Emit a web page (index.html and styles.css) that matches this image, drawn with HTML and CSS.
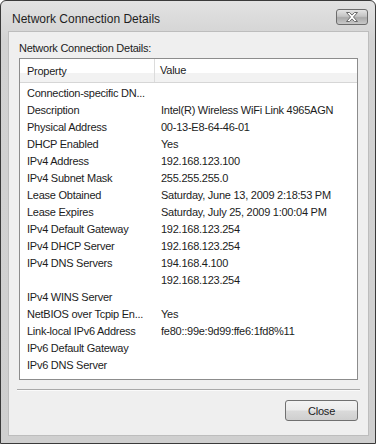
FILE: index.html
```html
<!DOCTYPE html>
<html lang="en">
<head>
  <meta charset="UTF-8" />
  <title>Network Connection Details</title>
  <link rel="stylesheet" href="styles.css">
</head>
<body>
  <div class="window">
    <div class="titlebar">
      <span class="title">Network Connection Details</span>
      <div class="x-btn">
        <svg width="14" height="10" viewBox="0 0 14 10">
          <path d="M1.5 0.5h3l2.5 2.6 2.5-2.6h3l-4 4.5 4 4.5h-3l-2.5-2.6-2.5 2.6h-3l4-4.5z" fill="#fff" stroke="#6a6a6a" stroke-width="1"/>
        </svg>
      </div>
    </div>

    <div class="client">
      <div class="label">Network Connection Details:</div>

      <div class="list">
        <div class="list-head">
          <div class="col-prop">Property</div>
          <div class="col-val">Value</div>
        </div>
        <div class="rows">
          <div class="row"><span>Connection-specific DN...</span><span></span></div>
          <div class="row"><span>Description</span><span>Intel(R) Wireless WiFi Link 4965AGN</span></div>
          <div class="row"><span>Physical Address</span><span>00-13-E8-64-46-01</span></div>
          <div class="row"><span>DHCP Enabled</span><span>Yes</span></div>
          <div class="row"><span>IPv4 Address</span><span>192.168.123.100</span></div>
          <div class="row"><span>IPv4 Subnet Mask</span><span>255.255.255.0</span></div>
          <div class="row"><span>Lease Obtained</span><span>Saturday, June 13, 2009 2:18:53 PM</span></div>
          <div class="row"><span>Lease Expires</span><span>Saturday, July 25, 2009 1:00:04 PM</span></div>
          <div class="row"><span>IPv4 Default Gateway</span><span>192.168.123.254</span></div>
          <div class="row"><span>IPv4 DHCP Server</span><span>192.168.123.254</span></div>
          <div class="row"><span>IPv4 DNS Servers</span><span>194.168.4.100</span></div>
          <div class="row"><span></span><span>192.168.123.254</span></div>
          <div class="row"><span>IPv4 WINS Server</span><span></span></div>
          <div class="row"><span>NetBIOS over Tcpip En...</span><span>Yes</span></div>
          <div class="row"><span>Link-local IPv6 Address</span><span>fe80::99e:9d99:ffe6:1fd8%11</span></div>
          <div class="row"><span>IPv6 Default Gateway</span><span></span></div>
          <div class="row"><span>IPv6 DNS Server</span><span></span></div>
        </div>
      </div>

      <div class="separator"></div>

      <div class="footer">
        <button class="btn">Close</button>
      </div>
    </div>
  </div>
</body>
</html>
```

FILE: styles.css
```css
html, body {
  margin: 0;
  padding: 0;
  background: #ffffff;
}
body {
  font-family: "Liberation Sans", Arial, sans-serif;
  font-size: 11px;
  color: #1c1c1c;
}
.window {
  width: 376px;
  height: 444px;
  box-sizing: border-box;
  border: 1px solid #3a3a3a;
  border-radius: 6px 6px 0 0;
  background: linear-gradient(#e2e2e2, #d2d2d2 40px, #cfcfcf);
  display: flex;
  flex-direction: column;
}
.titlebar {
  height: 30px;
  display: flex;
  justify-content: space-between;
  align-items: flex-start;
  padding: 0 7px 0 11px;
}
.title {
  font-size: 12px;
  line-height: 15px;
  margin-top: 11px;
  color: #1e1e1e;
}
.x-btn {
  margin-top: 8px;
  width: 30px;
  height: 14px;
  border: 1px solid #6c6c6c;
  border-radius: 3px;
  background: linear-gradient(#e4e4e4, #c4c4c4 45%, #a9a9a9 55%, #c9c9c9);
  display: flex;
  align-items: center;
  justify-content: center;
}
.client {
  flex: 1;
  margin: 0 6px 7px 7px;
  border: 1px solid #bdbdbd;
  background: #efefef;
  padding: 8px 10px 0 10px;
  display: flex;
  flex-direction: column;
}
.label {
  line-height: 17px;
  margin-bottom: 1px;
  letter-spacing: -0.25px;
}
.list {
  height: 322px;
  box-sizing: border-box;
  border: 1px solid #8c8c8c;
  background: #ffffff;
  letter-spacing: -0.25px;
}
.list-head {
  height: 23px;
  display: flex;
  align-items: center;
  border-bottom: 1px solid #d6d6d6;
  background: linear-gradient(#ffffff 62%, #f2f2f2 62%);
}
.col-prop {
  width: 127px;
  padding-left: 7px;
  height: 23px;
  line-height: 25px;
  border-right: 1px solid #dcdcdc;
}
.col-val {
  padding-left: 5px;
  line-height: 25px;
}
.rows {
  padding-top: 2px;
}
.row {
  display: grid;
  grid-template-columns: 135px 1fr;
  height: 17px;
  line-height: 17px;
}
.row span:first-child {
  padding-left: 7px;
}
.row span:last-child {
  padding-left: 6px;
}
.separator {
  margin: 9px -2px 0 -2px;
  height: 1px;
  background: #a9a9a9;
  border-bottom: 1px solid #fafafa;
}
.footer {
  display: flex;
  justify-content: flex-end;
  padding-top: 9px;
}
.btn {
  width: 73px;
  height: 21px;
  border: 1px solid #707070;
  border-radius: 3px;
  background: linear-gradient(#f3f3f3, #ebebeb 48%, #dadada 52%, #cfcfcf);
  font-family: "Liberation Sans", Arial, sans-serif;
  font-size: 11px;
  color: #1c1c1c;
  padding: 0;
  letter-spacing: -0.2px;
}
```
